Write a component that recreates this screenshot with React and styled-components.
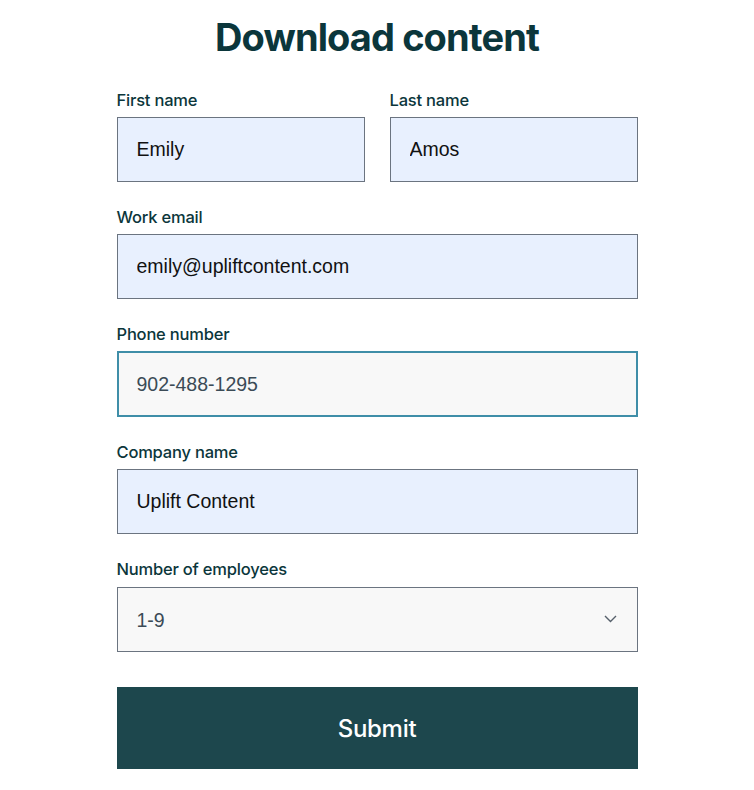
import React, { useState } from "react";
import styled, { createGlobalStyle } from "styled-components";

const GlobalStyle = createGlobalStyle`
  html, body {
    margin: 0;
    padding: 0;
    background: #ffffff;
  }
  body {
    font-family: "Inter", "Noto Sans", sans-serif;
    -webkit-font-smoothing: antialiased;
  }
`;

const Page = styled.main`
  width: 754px;
  display: flex;
  flex-direction: column;
  align-items: center;
  padding-top: 13px;
`;

const Title = styled.h1`
  margin: 0 0 29px;
  font-family: "Inter", sans-serif;
  font-weight: 700;
  font-size: 38px;
  line-height: 48px;
  letter-spacing: -0.9px;
  color: #0b363b;
  text-align: center;
`;

const Form = styled.form`
  width: 521px;
  display: flex;
  flex-direction: column;
  gap: 25px;
`;

const Row = styled.div`
  display: grid;
  grid-template-columns: 1fr 1fr;
  column-gap: 25px;
`;

const Field = styled.label`
  display: flex;
  flex-direction: column;
  gap: 7px;
`;

const Label = styled.span`
  font-family: "Inter", sans-serif;
  font-weight: 500;
  font-size: 16.5px;
  line-height: 20px;
  letter-spacing: -0.2px;
  color: #0b363b;
`;

const Input = styled.input`
  box-sizing: border-box;
  height: ${(p) => (p.$focused ? "66px" : "65px")};
  width: 100%;
  font-family: "Liberation Sans", Arial, sans-serif;
  font-size: 19.5px;
  color: ${(p) => (p.$muted ? "#3b4b56" : "#111111")};
  background: ${(p) => (p.$filled ? "#e8f0fe" : "#f8f8f8")};
  border: ${(p) => (p.$focused ? "2px solid #3f8ea8" : "1px solid #6b7480")};
  padding: 0 ${(p) => (p.$focused ? "18px" : "19px")};
  border-radius: 0;
  outline: none;
`;

const SelectWrap = styled.div`
  position: relative;
  display: flex;
  margin-top: 1px;
`;

const Select = styled.select`
  appearance: none;
  box-sizing: border-box;
  height: 65px;
  width: 100%;
  padding: 0 19px;
  font-family: "Liberation Sans", Arial, sans-serif;
  font-size: 19.5px;
  color: #3b4b56;
  background: #f8f8f8;
  border: 1px solid #6b7480;
  border-radius: 0;
  outline: none;
`;

const Chevron = styled.svg`
  position: absolute;
  right: 21px;
  top: 28px;
  pointer-events: none;
`;

const Submit = styled.button`
  margin-top: 10px;
  height: 82px;
  width: 100%;
  border: none;
  background: #1d474d;
  color: #ffffff;
  font-family: "Inter", sans-serif;
  font-weight: 500;
  font-size: 24px;
  letter-spacing: -0.3px;
  cursor: pointer;
`;

export default function App() {
  const [form, setForm] = useState({
    first: "Emily",
    last: "Amos",
    email: "emily@upliftcontent.com",
    phone: "902-488-1295",
    company: "Uplift Content",
    employees: "1-9",
  });

  const set = (key) => (e) => setForm({ ...form, [key]: e.target.value });

  return (
    <>
      <GlobalStyle />
      <Page>
        <Title>Download content</Title>
        <Form onSubmit={(e) => e.preventDefault()}>
          <Row>
            <Field>
              <Label>First name</Label>
              <Input $filled value={form.first} onChange={set("first")} />
            </Field>
            <Field>
              <Label>Last name</Label>
              <Input $filled value={form.last} onChange={set("last")} />
            </Field>
          </Row>
          <Field>
            <Label>Work email</Label>
            <Input $filled value={form.email} onChange={set("email")} />
          </Field>
          <Field>
            <Label>Phone number</Label>
            <Input $focused $muted value={form.phone} onChange={set("phone")} />
          </Field>
          <Field>
            <Label>Company name</Label>
            <Input $filled value={form.company} onChange={set("company")} />
          </Field>
          <Field>
            <Label>Number of employees</Label>
            <SelectWrap>
              <Select value={form.employees} onChange={set("employees")}>
                <option>1-9</option>
                <option>10-49</option>
                <option>50-249</option>
                <option>250+</option>
              </Select>
              <Chevron width="13" height="8" viewBox="0 0 13 8" fill="none">
                <path d="M1 1l5.5 5.5L12 1" stroke="#56606b" strokeWidth="1.4" />
              </Chevron>
            </SelectWrap>
          </Field>
          <Submit type="submit">Submit</Submit>
        </Form>
      </Page>
    </>
  );
}
